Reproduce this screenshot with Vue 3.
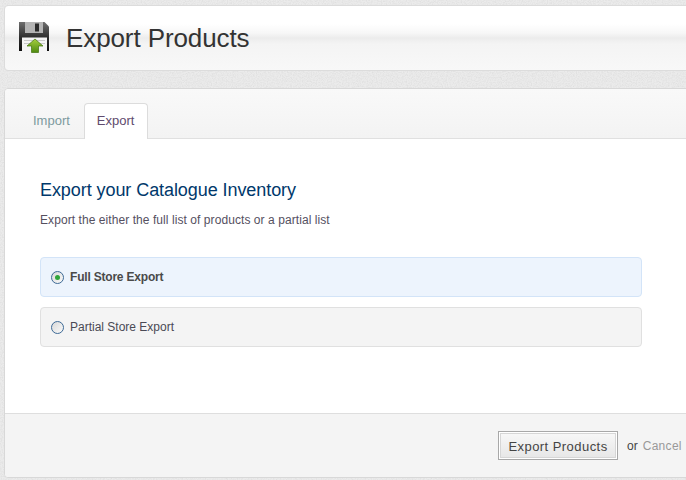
<script setup>
const tabs = [
  { label: 'Import', active: false },
  { label: 'Export', active: true },
]
const options = [
  { label: 'Full Store Export', selected: true },
  { label: 'Partial Store Export', selected: false },
]
</script>

<template>
  <div class="page">
    <svg class="noise" width="686" height="480" aria-hidden="true">
      <filter id="grain">
        <feTurbulence type="fractalNoise" baseFrequency="0.8" numOctaves="2" seed="4" />
        <feColorMatrix type="matrix" values="0 0 0 0 0.5  0 0 0 0 0.5  0 0 0 0 0.5  0.5 0 0 0 -0.18" />
      </filter>
      <rect width="686" height="480" filter="url(#grain)" />
    </svg>

    <header class="title-card">
      <svg class="disk" width="32" height="32" viewBox="0 0 32 32" aria-hidden="true">
        <defs>
          <linearGradient id="diskBody" x1="0" y1="0" x2="0" y2="1">
            <stop offset="0" stop-color="#6e6e6e" />
            <stop offset="0.55" stop-color="#2c2c2c" />
            <stop offset="1" stop-color="#0e0e0e" />
          </linearGradient>
          <linearGradient id="arrow" x1="0" y1="0" x2="0" y2="1">
            <stop offset="0" stop-color="#a6cf3f" />
            <stop offset="1" stop-color="#4f8a10" />
          </linearGradient>
        </defs>
        <path d="M1 1 H26.500 L31 5.500 V30 H1 Z" fill="url(#diskBody)" />
        <rect x="7" y="1" width="18" height="11" fill="#b4b4b4" />
        <rect x="17" y="2.500" width="4" height="8" fill="#2b2b2b" />
        <rect x="4" y="16.500" width="25" height="13.500" fill="#f4f4f4" />
        <path d="M6 19.500 H27 M6 22.500 H27" stroke="#c8c8c8" />
        <path d="M17 18 L25 25 H20.500 V31.500 H13.500 V25 H9 Z" fill="url(#arrow)" stroke="#41730d" stroke-width="0.700" />
      </svg>
      <h1 class="title">Export Products</h1>
    </header>

    <main class="panel">
      <nav class="tabs">
        <span
          v-for="tab in tabs"
          :key="tab.label"
          class="tab"
          :class="{ active: tab.active }"
        >{{ tab.label }}</span>
      </nav>

      <section class="content">
        <h2 class="heading">Export your Catalogue Inventory</h2>
        <p class="lead">Export the either the full list of products or a partial list</p>

        <div class="options">
          <label
            v-for="opt in options"
            :key="opt.label"
            class="option"
            :class="{ selected: opt.selected }"
          >
            <span class="radio"><span v-if="opt.selected" class="dot"></span></span>
            <span>{{ opt.label }}</span>
          </label>
        </div>
      </section>

      <footer class="actions">
        <button class="submit" type="button">Export Products</button>
        <span class="or">or</span>
        <a class="cancel">Cancel</a>
      </footer>
    </main>
  </div>
</template>

<style>
html, body { margin: 0; background: #ebebeb; }
</style>

<style scoped>
.page {
  position: relative;
  width: 686px;
  height: 480px;
  overflow: hidden;
  box-sizing: border-box;
  padding: 5px 0 0 4px;
  background: #ebebeb;
  font-family: "Liberation Sans", Arial, sans-serif;
}
.noise { position: absolute; left: 0; top: 0; }
.title-card {
  position: relative;
  box-sizing: border-box;
  width: 720px;
  height: 66px;
  display: flex;
  align-items: center;
  padding: 0 0 0 13px;
  border: 1px solid #dcdcdc;
  border-radius: 4px;
  background: linear-gradient(#fff 0, #fff 18px, #f7f7f7 27px, #ececec 32px, #f4f4f4 38px, #f8f8f8 100%);
}
.disk { margin-top: -2px; }
.title {
  margin: 0 0 0 16px;
  font-size: 26px;
  font-weight: 400;
  line-height: 32px;
  letter-spacing: -0.100px;
  color: #333;
}
.panel {
  position: relative;
  box-sizing: border-box;
  width: 720px;
  height: 390px;
  margin-top: 17px;
  display: flex;
  flex-direction: column;
  background: #fff;
  border: 1px solid #d8d8d8;
  border-radius: 4px;
}
.tabs {
  display: flex;
  align-items: flex-end;
  box-sizing: border-box;
  height: 50px;
  padding-left: 15px;
  border-bottom: 1px solid #e0e0e0;
  border-radius: 4px 4px 0 0;
  background: linear-gradient(#f9f9f9, #f3f3f3);
}
.tab {
  box-sizing: border-box;
  height: 35px;
  padding: 1px 13px 0;
  font-size: 13px;
  line-height: 33px;
  color: #7d9a9e;
}
.tab.active {
  height: 36px;
  margin-bottom: -1px;
  background: #fff;
  color: #5f4b6e;
  border: 1px solid #dcdcdc;
  border-bottom: 0;
  border-radius: 4px 4px 0 0;
  padding: 0 13px 0 12px;
  margin-left: 1px;
}
.content {
  flex: 1;
  padding: 41px 0 0 35px;
}
.heading {
  margin: 0;
  font-size: 18px;
  font-weight: 400;
  line-height: 20px;
  letter-spacing: -0.070px;
  color: #00386b;
}
.lead {
  margin: 13px 0 0;
  font-size: 12px;
  line-height: 14px;
  letter-spacing: 0.070px;
  color: #55505f;
}
.options {
  display: flex;
  flex-direction: column;
  gap: 10px;
  width: 602px;
  margin-top: 30px;
}
.option {
  box-sizing: border-box;
  height: 40px;
  display: flex;
  align-items: center;
  gap: 6px;
  padding-left: 10px;
  font-size: 12px;
  color: #4a4a55;
  background: #f4f4f4;
  border: 1px solid #e0e0e0;
  border-radius: 4px;
}
.option.selected {
  background: #edf4fd;
  border-color: #d3e4f8;
  font-weight: 700;
  letter-spacing: -0.200px;
  color: #4a4a4a;
}
.radio {
  box-sizing: border-box;
  width: 13px;
  height: 13px;
  display: flex;
  align-items: center;
  justify-content: center;
  border: 1px solid #3e6a96;
  border-radius: 50%;
  background: linear-gradient(135deg, #d8d8d8, #fafafa);
}
.dot {
  width: 5px;
  height: 5px;
  border-radius: 50%;
  background: #2fa53a;
}
.actions {
  box-sizing: border-box;
  height: 64px;
  display: flex;
  align-items: center;
  padding: 0 0 0 493px;
  background: #f4f4f4;
  border-top: 1px solid #dedede;
  border-radius: 0 0 4px 4px;
}
.submit {
  box-sizing: border-box;
  width: 120px;
  height: 29px;
  padding: 1px 0 0;
  font-family: "Liberation Sans", Arial, sans-serif;
  font-size: 13px;
  letter-spacing: 0.450px;
  color: #444;
  background: linear-gradient(#f8f8f8, #e6e6e6);
  border: 1px solid #a8a8a8;
  box-shadow: inset 0 0 0 1px #fff, inset 0 0 0 2px #d6d6d6;
}
.or {
  margin-left: 9px;
  font-size: 12px;
  color: #444;
}
.cancel {
  margin-left: 5px;
  font-size: 12px;
  letter-spacing: 0.300px;
  color: #999;
}
</style>
